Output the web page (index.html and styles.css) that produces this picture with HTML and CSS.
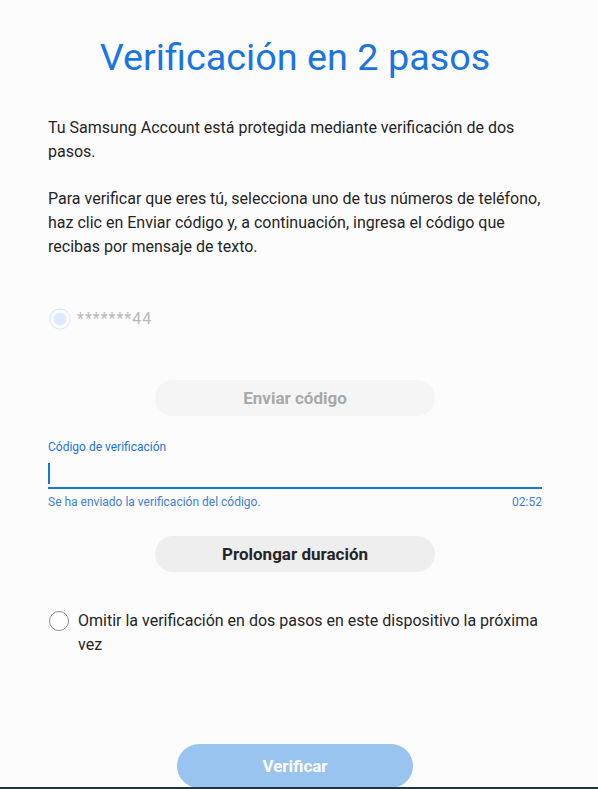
FILE: index.html
```html
<!DOCTYPE html>
<html lang="es">
<head>
<meta charset="utf-8">
<title>Verificación en 2 pasos</title>
<link rel="stylesheet" href="styles.css">
</head>
<body>
<main class="page">
  <h1 class="title">Verificación en 2 pasos</h1>
  <p class="text">Tu Samsung Account está protegida mediante verificación de dos pasos.</p>
  <p class="text text-second">Para verificar que eres tú, selecciona uno de tus números de teléfono, haz clic en Enviar código y, a continuación, ingresa el código que recibas por mensaje de texto.</p>

  <div class="phone-row">
    <svg class="radio" width="22" height="22" viewBox="0 0 22 22" aria-hidden="true">
      <circle cx="11" cy="11" r="10" fill="#ffffff" stroke="#dbe8fb" stroke-width="1.2"/>
      <circle cx="11" cy="11" r="6.5" fill="#dde9fc"/>
    </svg>
    <span class="phone">*******44</span>
  </div>

  <div class="btn-row btn-row-send">
    <button class="btn btn-disabled" type="button">Enviar código</button>
  </div>

  <div class="field">
    <label class="field-label">Código de verificación</label>
    <div class="field-input"><span class="caret"></span></div>
    <div class="field-help">
      <span>Se ha enviado la verificación del código.</span>
      <span>02:52</span>
    </div>
  </div>

  <div class="btn-row btn-row-extend">
    <button class="btn btn-grey" type="button">Prolongar duración</button>
  </div>

  <div class="skip-row">
    <span class="check"></span>
    <span class="skip-text">Omitir la verificación en dos pasos en este dispositivo la próxima vez</span>
  </div>

  <div class="btn-row btn-row-verify">
    <button class="btn btn-primary" type="button">Verificar</button>
  </div>
</main>
<div class="bottom-edge"></div>
</body>
</html>
```

FILE: styles.css
```css
html, body {
  margin: 0;
  padding: 0;
}

body {
  background: #fcfcfc;
  font-family: Roboto, "Liberation Sans", sans-serif;
  color: #252525;
  height: 789px;
  overflow: hidden;
  position: relative;
}

.page {
  padding: 33px 56px 0 48px;
  display: flex;
  flex-direction: column;
}

.title {
  margin: 0;
  font-size: 37.8px;
  line-height: 48px;
  font-weight: 400;
  color: #1b74e4;
  text-align: center;
}

.text {
  margin: 35px 0 0;
  font-size: 16px;
  line-height: 24px;
}

.text-second {
  margin-top: 23px;
}

.phone-row {
  display: flex;
  align-items: center;
  gap: 6px;
  margin-top: 48px;
  height: 24px;
}

.radio {
  display: block;
  margin-left: 1px;
}

.phone {
  font-size: 16px;
  letter-spacing: 1px;
  color: #b9b9b9;
  line-height: 24px;
}

.btn-row {
  display: flex;
  justify-content: center;
}

.btn-row-send {
  margin-top: 49px;
}

.btn {
  border: none;
  font-family: inherit;
  font-weight: 700;
  font-size: 17px;
  height: 36px;
  width: 280px;
  border-radius: 18px;
  padding: 0;
}

.btn-disabled {
  background: #f5f5f5;
  color: #a9a9a9;
}

.btn-grey {
  background: #eeeeee;
  color: #252525;
}

.btn-primary {
  background: #99c4ef;
  color: #ffffff;
  width: 236px;
  height: 44px;
  border-radius: 22px;
}

.field {
  margin-top: 23px;
  display: flex;
  flex-direction: column;
}

.field-label {
  font-size: 12px;
  line-height: 16px;
  color: #1b73e0;
}

.field-input {
  height: 32px;
  border-bottom: 2px solid #1b74e4;
  display: flex;
  align-items: center;
}

.caret {
  display: block;
  width: 2px;
  height: 21px;
  background: #1b74e4;
  margin-top: 4px;
}

.field-help {
  display: flex;
  justify-content: space-between;
  font-size: 12px;
  line-height: 16px;
  color: #3f7fd6;
  margin-top: 5px;
}

.btn-row-extend {
  margin-top: 26px;
}

.skip-row {
  display: flex;
  align-items: flex-start;
  gap: 9px;
  margin-top: 37px;
}

.check {
  flex: none;
  width: 18px;
  height: 18px;
  border: 1px solid #8c8c8c;
  border-radius: 50%;
  background: #ffffff;
  margin-top: 2px;
  margin-left: 1px;
}

.skip-text {
  font-size: 16px;
  line-height: 24px;
}

.btn-row-verify {
  margin-top: 87px;
}

.bottom-edge {
  position: absolute;
  left: 0;
  right: 0;
  bottom: 0;
  height: 2px;
  background: #1f3541;
}
```
